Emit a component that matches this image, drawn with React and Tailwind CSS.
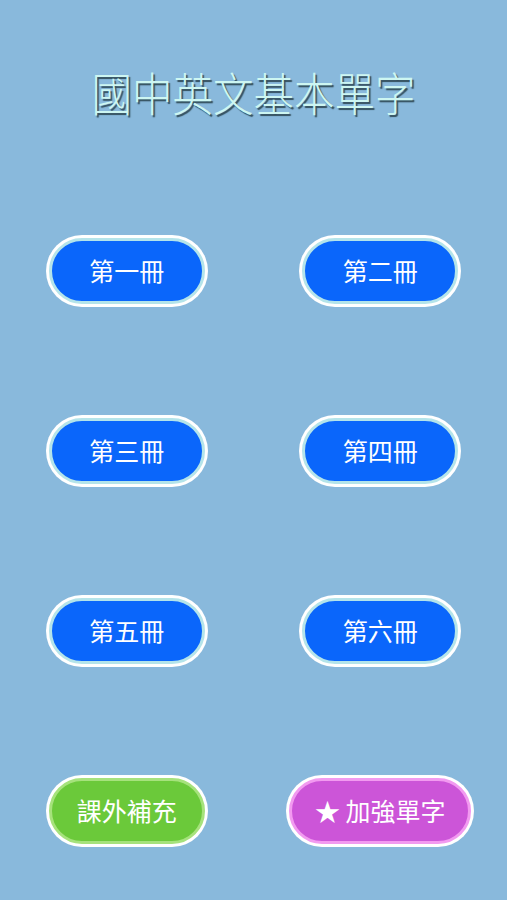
import React from "react";

const font = { fontFamily: '"Noto Sans CJK TC", "Noto Sans", sans-serif' };

// ---------------- BOOK BUTTON ----------------
const BookButton = ({ label, tone = "blue", wide = false }) => {
  const tones = {
    blue: "border-[#b4e4ea] bg-[#0a66fb]",
    green: "border-[#a6e27c] bg-[#6bc93a]",
    purple: "border-[#f29af0] bg-[#cc55d8]",
  };

  return (
    <button
      className={
        wide
          ? "h-[72px] w-[188px] rounded-full bg-white p-[3px]"
          : "h-[72px] w-[162px] rounded-full bg-white p-[3px]"
      }
    >
      <div
        className={`flex h-full w-full items-center justify-center rounded-full border-[3px] text-[25px] font-normal text-white ${tones[tone]}`}
      >
        {label}
      </div>
    </button>
  );
};

const App = () => {
  const books = ["第一冊", "第二冊", "第三冊", "第四冊", "第五冊", "第六冊"];

  return (
    <div className="min-h-[900px] w-full bg-[#89b9dc] pt-[66px]" style={font}>
      <h1 className="h-[50px] scale-x-[0.88] text-center text-[46px] leading-[50px] font-light text-[#cdf6f2] [text-shadow:2px_2px_1px_#34505e]">
        國中英文基本單字
      </h1>

      <div className="mt-[119px] grid grid-cols-2 justify-items-center gap-y-[108px]">
        {books.map((book) => (
          <BookButton key={book} label={book} />
        ))}

        <BookButton label="課外補充" tone="green" />
        <BookButton label="★ 加強單字" tone="purple" wide />
      </div>
    </div>
  );
};

export default App;
